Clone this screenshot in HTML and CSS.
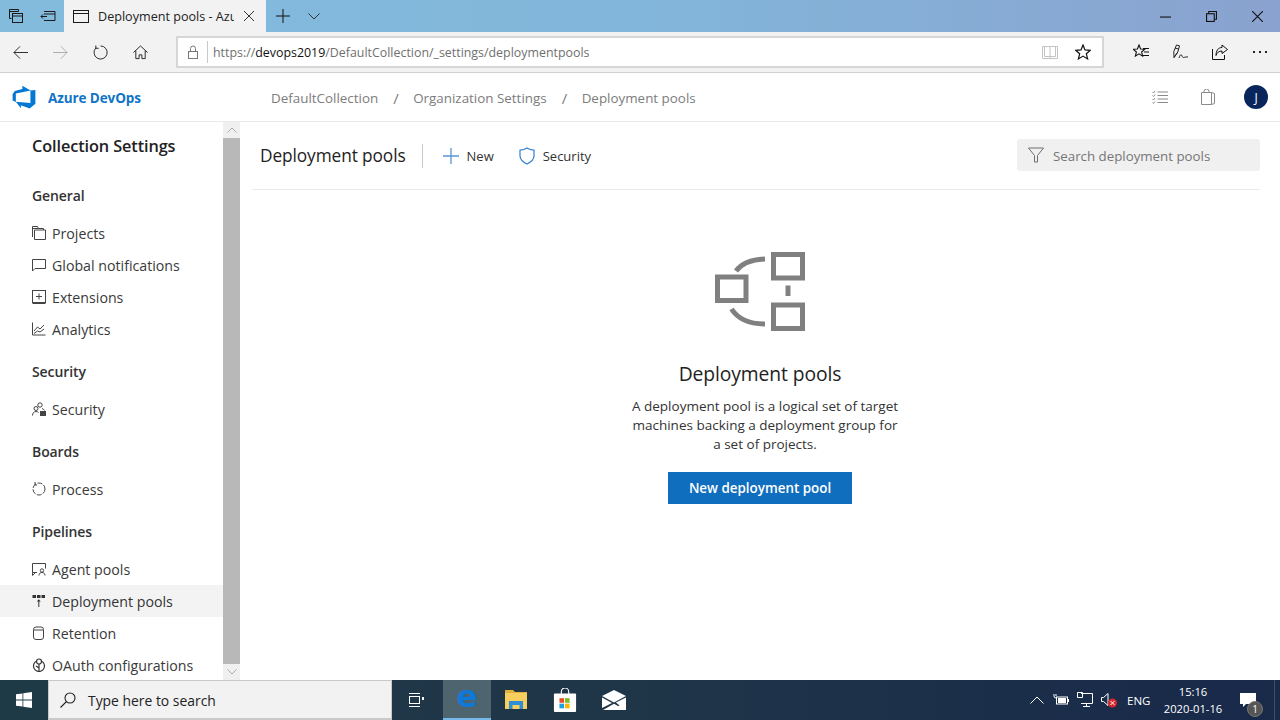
FILE: index.html
```html
<!DOCTYPE html>
<html lang="en">
<head>
<meta charset="utf-8">
<title>Deployment pools - Azure DevOps</title>
<link rel="stylesheet" href="styles.css">
</head>
<body>
<div class="screen">
  <div class="titlebar">
    <div class="tb-left">
      <svg class="ico16" viewBox="0 0 16 16" fill="none" stroke="#1a1a1a"><path d="M3.5 10.5h-2v-9h9v2M1.5 3.5h9"/><rect x="4.500" y="5.500" width="10" height="9"/><path d="M4.500 8h10"/></svg>
      <svg class="ico16 ml-16" viewBox="0 0 16 16" fill="none" stroke="#1a1a1a"><path d="M4 3.500h11v9H4M4 6h11M7 8.500H1M3 6.500l-2 2 2 2"/></svg>
    </div>
    <div class="tab">
      <svg class="ico16" viewBox="0 0 16 16" fill="none" stroke="#1a1a1a"><rect x="0.500" y="2.500" width="15" height="12"/><path d="M.5 5.500h15"/></svg>
      <span class="tab-title">Deployment pools - Azure DevOps</span>
      <svg class="ico-x" viewBox="0 0 10 10" fill="none" stroke="#333"><path d="M0 0l10 10M10 0L0 10"/></svg>
    </div>
    <svg class="tb-plus" viewBox="0 0 14 14" fill="none" stroke="#111"><path d="M7 0v14M0 7h14"/></svg>
    <svg class="tb-chev" viewBox="0 0 12 7" fill="none" stroke="#333"><path d="M.5.5L6 6 11.500.5"/></svg>
    <div class="spacer"></div>
    <svg class="win win-min" viewBox="0 0 10 10" fill="none" stroke="#111"><path d="M0 5.500h10"/></svg>
    <svg class="win" viewBox="0 0 10 10" fill="none" stroke="#111"><rect x="0.500" y="2.500" width="7" height="7"/><path d="M2.500 2.500v-2h7v7h-2"/></svg>
    <svg class="win" viewBox="0 0 10 10" fill="none" stroke="#111"><path d="M0 0l10 10M10 0L0 10"/></svg>
  </div>

  <div class="toolbar">
    <svg class="nav" viewBox="0 0 16 16" fill="none" stroke="#222"><path d="M16 8H1M7.500 1.500L1 8l6.500 6.500"/></svg>
    <svg class="nav" viewBox="0 0 16 16" fill="none" stroke="#aaa"><path d="M0 8h15M8.500 1.500L15 8l-6.500 6.500"/></svg>
    <svg class="nav" viewBox="0 0 16 16" fill="none" stroke="#222"><path d="M3.200 3A7 7 0 1 0 8 1M3 .5V3.500H6"/></svg>
    <svg class="nav" viewBox="0 0 16 16" fill="none" stroke="#222"><path d="M.5 8L8 1l7.500 7M3 6v8.500h3.500v-4h3v4H13V6"/></svg>
    <div class="address">
      <svg class="lock" viewBox="0 0 12 14" fill="none" stroke="#777"><rect x="1.500" y="6.500" width="9" height="7"/><path d="M3.500 6.500V3.500a2.500 2.500 0 0 1 5 0v3"/></svg>
      <span class="addr-sep"></span>
      <span class="url"><span class="url-dim">https://</span>devops2019<span class="url-dim">/DefaultCollection/_settings/deploymentpools</span></span>
      <span class="spacer"></span>
      <svg class="reading" viewBox="0 0 16 16" fill="none" stroke="#c4c4c4"><path d="M.5 2.500h15v12H.5zM8 2.500v12M2.500 2.500v10H8h5.500v-10"/></svg>
      <svg class="star" viewBox="0 0 16 16" fill="none" stroke="#111" stroke-width="1.200"><path d="M8 1l2 4.900 5.300.4-4 3.400 1.300 5.200L8 12.100l-4.600 2.800 1.300-5.200-4-3.400L6 5.900z"/></svg>
    </div>
    <svg class="tool t1" viewBox="0 0 16 16" fill="none" stroke="#111" stroke-width="1.100"><path d="M6 1l1.600 4 4.100.3-3.100 2.700 1 4.100L6 9.900l-3.600 2.200 1-4.100L.3 5.300l4.100-.3zM10 4.500h6M11 8h5M9.500 11.500H16"/></svg>
    <svg class="tool t2" viewBox="0 0 16 16" fill="none" stroke="#222"><path d="M1 13.500L.8 7.500 3.500 1 6.500 1.800 4.800 8zM1 13.500L4.800 8M2 4l3.500 1M6 14c.8-2.500 1.800-4 2.500-3s.8 2.500 2 2.500c1.200 0 1.500-.8 4.500-.5"/></svg>
    <svg class="tool t3" viewBox="0 0 16 16" fill="none" stroke="#111"><path d="M.5 5v10.500h12V11M10 1l5.500 4.500L10 9.500V7C7 7 5 8.500 4 11.500 4 7 6 3.500 10 3.500z"/></svg>
    <div class="dots"><i></i><i></i><i></i></div>
  </div>

  <header class="header">
    <div class="brand">
      <svg class="logo" viewBox="0 0 16 16"><path fill="#0078d4" d="M15 3.622v8.512L11.500 15l-5.425-1.975v1.958L3.004 10.970l8.951.7V4.005L15 3.622zm-2.984.428L6.994 1v2.001L2.382 4.356 1 6.130v4.029l1.978.873V5.869l9.038-1.818z"/></svg>
      <span class="brand-name">Azure DevOps</span>
    </div>
    <nav class="crumbs">
      <span>DefaultCollection</span><span class="slash">/</span>
      <span>Organization Settings</span><span class="slash">/</span>
      <span>Deployment pools</span>
    </nav>
    <div class="spacer"></div>
    <svg class="hd-list" viewBox="0 0 16 14" fill="none" stroke="#8a8a8a"><path d="M5.500 2h10.500M5.500 5.500H16M5.500 9H16M5.500 12.500H16M.5 2l1 1 1.500-2M.5 5.500l1 1 1.500-2M.5 9l1 1 1.500-2M.5 12.500l1 1 1.500-2"/></svg>
    <svg class="hd-bag" viewBox="0 0 14 16" fill="none" stroke="#8a8a8a"><path d="M.5 3.500h10v12H.5zM10.500 3.500l3 1v10l-3 1M3 3.500V2.500a2.500 2.500 0 0 1 5 0v1"/></svg>
    <div class="avatar">J</div>
  </header>

  <div class="body">
    <aside class="sidebar">
      <div class="side-scroll">
        <h1 class="side-title">Collection Settings</h1>
        <h2 class="side-head">General</h2>
        <a class="side-item"><svg class="si" viewBox="0 0 14 14" fill="none" stroke="#444"><path d="M.5 11V.5h5l1 2h5V4M2.500 13.500V4h11v9.500zM.5 2.500h6"/></svg>Projects</a>
        <a class="side-item"><svg class="si" viewBox="0 0 14 14" fill="none" stroke="#444"><path d="M.5 1.500h13v9H3l-2.500 2.500z"/></svg>Global notifications</a>
        <a class="side-item"><svg class="si" viewBox="0 0 14 14" fill="none" stroke="#444"><rect x="0.500" y="0.500" width="13" height="12"/><path d="M7 3.500v6M4 6.500h6M.5 13.500h13" /></svg>Extensions</a>
        <a class="side-item"><svg class="si" viewBox="0 0 14 14" fill="none" stroke="#444"><path d="M.5.5v12.500h13M2 9l3.500-4 2.500 2 4-4M2 11.500l3.500-2.500 2.500 1 4-3"/></svg>Analytics</a>
        <h2 class="side-head sec">Security</h2>
        <a class="side-item"><svg class="si" viewBox="0 0 14 14" fill="none" stroke="#444"><circle cx="8" cy="3" r="2.200"/><circle cx="4" cy="6.500" r="2"/><path d="M.5 13.500c0-2.500 1.500-4 3.500-4 1 0 2 .5 2.500 1M10 6.500c1 .3 2 1 2.500 2"/><rect x="8.500" y="9.500" width="5" height="4" fill="#444"/></svg>Security</a>
        <h2 class="side-head sec">Boards</h2>
        <a class="side-item"><svg class="si" viewBox="0 0 14 14" fill="none" stroke="#444" stroke-dasharray="5 1.500"><circle cx="7" cy="7" r="6"/><path d="M3 0v3h2" stroke-dasharray="none"/></svg>Process</a>
        <h2 class="side-head sec">Pipelines</h2>
        <a class="side-item"><svg class="si" viewBox="0 0 14 14" fill="none" stroke="#444"><path d="M5 10.500H.5v-9h13v5M.5 10.500v3l3-3"/><circle cx="10" cy="8.500" r="1.700"/><path d="M7 13.500c0-2 1.200-3 3-3s3 1 3 3"/></svg>Agent pools</a>
        <a class="side-item active"><svg class="si" viewBox="0 0 14 14" fill="#333" stroke="none"><rect x="0.500" y="1" width="3.500" height="3"/><rect x="5" y="1" width="3.500" height="3"/><rect x="9.500" y="1" width="3.500" height="3"/><path d="M6.300 13V7.500H4.800L6.800 5.300l2 2.200H7.300V13z"/></svg>Deployment pools</a>
        <a class="side-item"><svg class="si" viewBox="0 0 14 14" fill="none" stroke="#444"><rect x="1.500" y="1" width="10" height="12.500" rx="2.500"/><path d="M1.500 4h10"/></svg>Retention</a>
        <a class="side-item"><svg class="si" viewBox="0 0 14 14" fill="none" stroke="#333" stroke-width="1.200"><circle cx="7" cy="8" r="5.500"/><circle cx="7" cy="3.500" r="2.500" fill="#fff"/><path d="M7 6v7.500M4 8l3 2"/></svg>OAuth configurations</a>
      </div>
      <div class="scrollbar">
        <div class="sb-btn"><svg class="sb-arrow" viewBox="0 0 10 6" fill="none" stroke="#aaa"><path d="M.5 5.500L5 1l4.500 4.500"/></svg></div>
        <div class="sb-thumb"></div>
        <div class="sb-btn"><svg class="sb-arrow" viewBox="0 0 10 6" fill="none" stroke="#aaa"><path d="M.5.5L5 5 9.500.5"/></svg></div>
      </div>
    </aside>

    <main class="main">
      <div class="cmdbar">
        <span class="page-title">Deployment pools</span>
        <span class="cmd-sep"></span>
        <button class="cmd">
          <svg class="cmd-plus" viewBox="0 0 16 16" fill="none" stroke="#5b94d6" stroke-width="1.300"><path d="M8 0v16M0 8h16"/></svg>New
        </button>
        <button class="cmd cmd-sec">
          <svg class="cmd-shield" viewBox="0 0 16 18" fill="none" stroke="#2f7fd2" stroke-width="1.200"><path d="M8 1c2 1.400 4 2 7 2.200V9c0 3.500-3 6-7 8-4-2-7-4.500-7-8V3.200C4 3 6 2.400 8 1z"/></svg>Security
        </button>
        <div class="spacer"></div>
        <div class="search">
          <svg class="funnel" viewBox="0 0 16 16" fill="none" stroke="#6e6e6e"><path d="M.5 1h15L9.500 8.500V15h-3V8.500z"/></svg>
          <span class="search-text">Search deployment pools</span>
        </div>
      </div>
      <section class="empty">
        <svg class="empty-ico" viewBox="0 0 92 82" fill="none" stroke="#808080" stroke-width="5">
          <rect x="59.500" y="3.500" width="29" height="23.500"/>
          <rect x="3.500" y="26" width="28.500" height="23.500"/>
          <rect x="59.500" y="54" width="29" height="23.500"/>
          <path d="M74 34.500v10.500"/>
          <path d="M22 20C28 12 38 8.500 51 8M17.500 58C24 68 36 73 51 73"/>
        </svg>
        <h2 class="empty-title">Deployment pools</h2>
        <p class="empty-text">A deployment pool is a logical set of target machines backing a deployment group for a set of projects.</p>
        <button class="primary">New deployment pool</button>
      </section>
    </main>
  </div>

  <footer class="taskbar">
    <div class="start">
      <svg class="winlogo" viewBox="0 0 16 16" fill="#fff"><path d="M0 2.300l6.500-.9v6.200H0zM7.300 1.300L16 0v7.600H7.300zM0 8.400h6.500v6.200L0 13.700zM7.300 8.400H16V16l-8.700-1.200z"/></svg>
    </div>
    <div class="tsearch">
      <svg class="tsearch-ico" viewBox="0 0 16 16" fill="none" stroke="#222" stroke-width="1.100"><circle cx="10" cy="6" r="5"/><path d="M6.500 9.500L.5 15.500"/></svg>
      <span class="tsearch-text">Type here to search</span>
    </div>
    <div class="tslot tslot-first">
      <svg class="ti" viewBox="0 0 16 16" fill="none" stroke="#fff"><rect x="1.500" y="4.500" width="10" height="7"/><path d="M1 1.500h11M1 14.500h11"/><rect x="14" y="5" width="2" height="3" fill="#fff" stroke="none"/></svg>
    </div>
    <div class="tslot tslot-on">
      <span class="edge-e">e</span>
    </div>
    <div class="tslot">
      <svg class="ti22" viewBox="0 0 22 22"><path fill="#e0b23c" d="M0 1h8l2 2h12v3H0z"/><rect y="4" width="22" height="16" fill="#f6cf5e"/><rect x="4" y="12" width="14" height="8" fill="#2e8fd6"/><rect x="7.500" y="16" width="7" height="4" fill="#f6cf5e"/></svg>
    </div>
    <div class="tslot">
      <svg class="ti24" viewBox="0 0 24 26"><path d="M8 7V4a4 4 0 0 1 8 0v3" fill="none" stroke="#fff" stroke-width="1.200"/><rect y="6" width="24" height="20" rx="1" fill="#fff"/><rect x="6" y="11" width="5" height="5" fill="#e8502c"/><rect x="12" y="11" width="5" height="5" fill="#7fba2a"/><rect x="6" y="17" width="5" height="5" fill="#1f9fe6"/><rect x="12" y="17" width="5" height="5" fill="#fbb800"/></svg>
    </div>
    <div class="tslot">
      <svg class="ti24" viewBox="0 0 24 20"><path fill="#fff" d="M0 6L12 0l12 6-12 6.500z"/><path fill="#fff" d="M0 7.500l10 5.500L0 18zM24 7.500V20H1l11-6.300 4.500 2.500 1-.6-3.600-3z"/></svg>
    </div>
    <div class="spacer"></div>
    <div class="tray">
      <svg class="tray-chev" viewBox="0 0 14 8" fill="none" stroke="#fff"><path d="M.5 7.500L7 1l6.500 6.500"/></svg>
      <svg class="tray-ico" viewBox="0 0 16 14" fill="none" stroke="#fff"><rect x="3.500" y="4" width="11" height="7"/><rect x="5" y="5" width="8" height="5" fill="#fff" stroke="none"/><path d="M15.500 6v3M1 1v2a2 2 0 0 0 2 2M3 1v2"/></svg>
      <svg class="tray-ico" viewBox="0 0 16 16" fill="none" stroke="#fff"><path d="M4 1.500h11.500v10H4M6 14.500h7M9.500 11.500v3M.5.500h5v5h-5z"/></svg>
      <svg class="tray-ico" viewBox="0 0 16 16"><path fill="none" stroke="#fff" d="M.5 5.500h2L7 1.500v12l-4.500-4h-2z"/><circle cx="11.500" cy="11" r="4.500" fill="#d8262c"/><path stroke="#fff" d="M9.500 9l4 4M13.500 9l-4 4"/></svg>
      <span class="lang">ENG</span>
      <div class="clock"><span>15:16</span><span>2020-01-16</span></div>
      <div class="notif">
        <svg class="notif-ico" viewBox="0 0 16 15" fill="#fff"><path d="M0 0h16v11H6l-3 3v-3H0z"/></svg>
        <span class="notif-badge">1</span>
      </div>
    </div>
  </footer>
</div>
</body>
</html>
```
FILE: styles.css
```css
* { box-sizing: border-box; }
html, body { margin: 0; padding: 0; height: 100%; overflow: hidden; }
body { font-family: "Open Sans", "Noto Sans", "Liberation Sans", sans-serif; color: #333; background: #fff; }
h1, h2, p { margin: 0; }
svg { display: block; flex: none; }
.screen { width: 1280px; height: 720px; display: flex; flex-direction: column; overflow: hidden; }
.spacer { flex: 1; }

.titlebar { height: 32px; flex: none; display: flex; align-items: center; background: linear-gradient(90deg, #83bbdd 0%, #82b6da 50%, #8aa2cf 100%); }
.tb-left { display: flex; width: 64px; padding-left: 8px; align-items: center; }
.ico16 { width: 16px; height: 16px; }
.ml-16 { margin-left: 16px; }
.tab { width: 202px; height: 32px; background: #f2f2f2; display: flex; align-items: center; padding-left: 9px; }
.tab-title { width: 136px; margin-left: 9px; font-size: 12.600px; color: #222; white-space: nowrap; overflow: hidden; }
.ico-x { width: 10px; height: 10px; margin-left: 10px; }
.tb-plus { width: 14px; height: 14px; margin-left: 10px; }
.tb-chev { width: 12px; height: 7px; margin-left: 18px; }
.win { width: 11px; height: 11px; margin-right: 35px; }
.win:last-child { margin-right: 17px; }

.toolbar { height: 41px; flex: none; background: #f2f2f2; border-bottom: 1px solid #cfcfcf; display: flex; align-items: center; padding-left: 13px; }
.nav { width: 15px; height: 15px; margin-right: 25px; }
.address { margin-left: 3px; width: 928px; height: 32px; background: #fff; border: 2px solid #d6d6d6; display: flex; align-items: center; padding-left: 9px; }
.lock { width: 12px; height: 14px; }
.addr-sep { width: 1px; height: 22px; background: #c8c8c8; margin: 0 5px 0 8px; }
.url { font-size: 12.400px; color: #111; white-space: nowrap; }
.url-dim { color: #6f6f6f; }
.reading { width: 16px; height: 16px; margin-right: 17px; }
.star { width: 16px; height: 16px; margin-right: 11px; }
.tool { width: 16px; height: 16px; }
.t1 { margin-left: 29px; }
.t2 { margin-left: 24px; }
.t3 { margin-left: 23px; }
.dots { display: flex; gap: 3px; margin-left: 25px; }
.dots i { width: 2px; height: 2px; background: #222; margin-right: 1px; }

.header { height: 49px; flex: none; border-bottom: 1px solid #eaeaea; display: flex; align-items: center; padding-right: 12px; background: #fff; }
.brand { width: 271px; display: flex; align-items: center; padding-left: 11px; }
.logo { width: 26px; height: 26px; }
.brand-name { margin: 1px 0 0 11px; font-size: 13.500px; font-weight: 700; color: #0f74c8; letter-spacing: -.1px; }
.crumbs { display: flex; align-items: center; font-size: 13.400px; color: #7c7c7c; margin-top: 1px; }
.slash { margin: 0 14.500px 0 15px; font-size: 15px; }
.hd-list { width: 16px; height: 14px; }
.hd-bag { width: 14px; height: 16px; margin-left: 33px; }
.avatar { width: 24px; height: 24px; border-radius: 50%; background: #08265c; color: #fff; font-size: 12px; display: flex; align-items: center; justify-content: center; margin-left: 29px; }

.body { flex: 1; min-height: 0; display: flex; }
.sidebar { width: 240px; flex: none; display: flex; }
.side-scroll { width: 223px; overflow: hidden; padding: 11px 0 0; }
.side-title { font-size: 16.300px; font-weight: 600; color: #222; height: 26px; line-height: 26px; padding-left: 32px; letter-spacing: -.1px; }
.side-head { font-size: 14px; font-weight: 600; color: #333; padding-left: 32px; height: 24px; line-height: 24px; margin-top: 25px; margin-bottom: 9px; letter-spacing: -.1px; }
.side-head.sec { margin-top: 15px; margin-bottom: 9px; }
.side-item { display: flex; align-items: center; height: 32px; padding-left: 32px; font-size: 14.200px; color: #3a3a3a; }
.side-item.active { background: #f3f3f3; color: #333; }
.si { width: 14px; height: 14px; margin-right: 6px; }
.scrollbar { width: 17px; flex: none; display: flex; flex-direction: column; background: #f0f0f0; }
.sb-btn { height: 16px; flex: none; display: flex; align-items: center; justify-content: center; }
.sb-arrow { width: 10px; height: 6px; }
.sb-thumb { flex: 1; background: #b8b8b8; }

.main { flex: 1; min-width: 0; padding: 0 20px 0 12px; }
.cmdbar { height: 68px; border-bottom: 1px solid #eaeaea; display: flex; align-items: center; padding-left: 8px; }
.page-title { font-size: 17.300px; color: #222; letter-spacing: -.1px; }
.cmd-sep { width: 1px; height: 24px; background: #c8c8c8; margin: 0 20px 0 16px; }
.cmd { display: flex; align-items: center; background: none; border: 0; padding: 0; font: inherit; font-size: 13px; color: #333; }
.cmd-plus { width: 16px; height: 16px; margin-right: 8px; }
.cmd-sec { margin-left: 25px; }
.cmd-shield { width: 16px; height: 18px; margin-right: 8px; }
.search { width: 243px; height: 32px; margin-bottom: 1px; border-radius: 3px; background: #f0f0f0; display: flex; align-items: center; padding-left: 11px; }
.funnel { width: 16px; height: 16px; margin-right: 9px; }
.search-text { font-size: 13.300px; color: #767676; margin-top: 2px; }

.empty { display: flex; flex-direction: column; align-items: center; padding: 61px 0 0 8px; }
.empty-ico { width: 92px; height: 82px; }
.empty-title { font-size: 19.300px; font-weight: 400; color: #222; margin-top: 27px; line-height: 28px; letter-spacing: -.1px; }
.empty-text { width: 272px; text-align: center; font-size: 13.500px; line-height: 19px; color: #333; margin: 9px 0 0 10px; }
.primary { margin-top: 18px; width: 184px; height: 32px; background: #106ebe; color: #fff; border: 0; font: inherit; font-size: 13.400px; font-weight: 600; }

.taskbar { height: 40px; flex: none; background: linear-gradient(90deg, #1f3a47 0%, #1f3548 50%, #18294a 100%); display: flex; align-items: stretch; color: #fff; }
.start { width: 48px; display: flex; align-items: center; justify-content: center; }
.winlogo { width: 16px; height: 16px; }
.tsearch { width: 344px; background: #f2f2f2; border: 1px solid #c9c9c9; border-bottom-width: 2px; display: flex; align-items: center; padding-left: 11px; color: #222; font-size: 13.900px; }
.tsearch-ico { width: 16px; height: 16px; margin-right: 12px; }
.tsearch-text { margin-top: 1px; }
.tslot { width: 49px; display: flex; align-items: center; justify-content: center; }
.tslot-first { width: 51px; padding-right: 3px; }
.tslot-on { width: 48px; background: #4e646e; border-bottom: 2px solid #76b9ed; }
.edge-e { font-family: "DejaVu Sans", sans-serif; font-size: 31px; font-weight: 700; color: #0f78d8; line-height: 1; margin-top: -6px; }
.ti { width: 16px; height: 16px; }
.ti22 { width: 22px; height: 22px; }
.ti24 { width: 24px; height: 24px; }
.tray { display: flex; align-items: center; }
.tray-chev { width: 14px; height: 8px; margin-right: 9px; }
.tray-ico { width: 16px; height: 16px; margin-right: 8px; }
.lang { font-size: 11.500px; margin-left: 2px; width: 37px; }
.clock { display: flex; flex-direction: column; align-items: center; font-size: 11.200px; line-height: 17px; width: 58px; margin-right: 12px; white-space: nowrap; }
.notif { width: 41px; height: 40px; position: relative; display: flex; align-items: center; padding-left: 6px; border-right: 1px solid #3d5066; margin-right: 5px; }
.notif-ico { width: 16px; height: 15px; }
.notif-badge { position: absolute; left: 13px; top: 21px; width: 16px; height: 16px; border-radius: 50%; background: #555; border: 1px solid #777; font-size: 10px; line-height: 14px; text-align: center; }
```
